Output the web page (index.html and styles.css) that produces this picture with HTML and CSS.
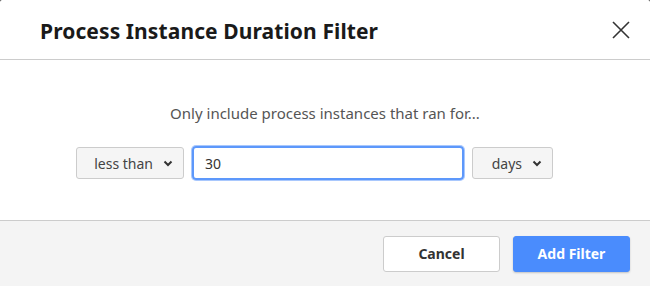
FILE: index.html
```html
<!DOCTYPE html>
<html lang="en">
<head>
    <meta charset="UTF-8">
    <title>Process Instance Duration Filter</title>
    <link rel="stylesheet" href="styles.css">
</head>
<body>
    <div class="modal">
        <div class="modal-header">
            <h1 class="modal-title">Process Instance Duration Filter</h1>
            <button class="close-button" aria-label="Close">
                <svg width="18" height="18" viewBox="0 0 18 18">
                    <path d="M1 1 L17 17 M17 1 L1 17" stroke="#333" stroke-width="1.6" fill="none"/>
                </svg>
            </button>
        </div>
        <div class="modal-body">
            <p class="filter-hint">Only include process instances that ran for...</p>
            <div class="filter-row">
                <div class="select select-operator">
                    <span>less than</span>
                    <svg class="caret" width="10" height="7" viewBox="0 0 10 7"><path d="M1.5 1.5 L5 5 L8.5 1.5" stroke="#333" stroke-width="2" fill="none"/></svg>
                </div>
                <div class="text-input">30</div>
                <div class="select select-unit">
                    <span>days</span>
                    <svg class="caret" width="10" height="7" viewBox="0 0 10 7"><path d="M1.5 1.5 L5 5 L8.5 1.5" stroke="#333" stroke-width="2" fill="none"/></svg>
                </div>
            </div>
        </div>
        <div class="modal-footer">
            <button class="btn">Cancel</button>
            <button class="btn btn-primary">Add Filter</button>
        </div>
    </div>
</body>
</html>
```

FILE: styles.css
```css
:root {
    --primary-color: #4a8cfd;
    --border-color: #cccccc;
    --text-color: #1a1a1a;
}
body {
    margin: 0;
    font-family: "Noto Sans", "Open Sans", sans-serif;
    color: var(--text-color);
    background: #333;
}
.modal {
    width: 650px;
    height: 286px;
    background: white;
    border-radius: 2px;
    display: flex;
    flex-direction: column;
}
.modal-header {
    height: 60px;
    box-sizing: border-box;
    border-bottom: 1px solid var(--border-color);
    display: flex;
    align-items: center;
    justify-content: space-between;
    padding: 3px 19px 0 40px;
}
.modal-title {
    margin: 0;
    font-size: 21px;
    font-weight: bold;
    letter-spacing: 0.1px;
}
.close-button {
    background: none;
    border: none;
    padding: 0;
    width: 20px;
    height: 20px;
    margin-top: -3px;
    display: flex;
    align-items: center;
    justify-content: center;
}
.modal-body {
    height: 160px;
    box-sizing: border-box;
    padding-top: 43px;
}
.filter-hint {
    margin: 0;
    text-align: center;
    font-size: 15px;
    color: #555;
}
.filter-row {
    display: flex;
    justify-content: center;
    gap: 8px;
    margin-top: 24px;
    padding-right: 21px;
}
.select {
    height: 32px;
    box-sizing: border-box;
    border: 1px solid var(--border-color);
    border-radius: 3px;
    background: #f5f5f5;
    display: flex;
    align-items: center;
    justify-content: flex-end;
    padding: 0 10px 0 0;
    gap: 10px;
    font-size: 14px;
    color: #444;
    white-space: nowrap;
}
.caret {
    flex-shrink: 0;
}
.select-operator {
    width: 108px;
}
.select-unit {
    width: 81px;
}
.text-input {
    width: 272px;
    height: 34px;
    box-sizing: border-box;
    border: 2px solid #5d98fb;
    border-radius: 4px;
    padding: 0 11px;
    display: flex;
    align-items: center;
    font-size: 14px;
    color: #333;
    margin-top: -1px;
    box-shadow: 0 0 0 1px #a9c8fd;
}
.modal-footer {
    flex: 1;
    background: #f4f4f4;
    border-top: 1px solid var(--border-color);
    display: flex;
    justify-content: flex-end;
    align-items: center;
    gap: 13px;
    padding: 0 20px 0 0;
}
.btn {
    width: 117px;
    height: 36px;
    font-family: inherit;
    font-size: 14px;
    font-weight: bold;
    border-radius: 3px;
    border: 1px solid var(--border-color);
    background: white;
    color: #333;
}
.btn-primary {
    background: var(--primary-color);
    border-color: var(--primary-color);
    color: white;
    box-shadow: 0 1px 2px rgba(0,0,0,0.2);
}
```
